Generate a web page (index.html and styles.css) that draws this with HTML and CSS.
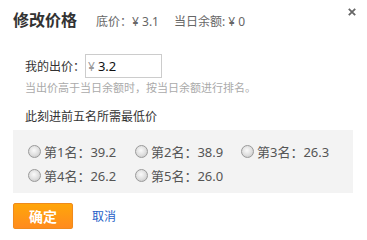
FILE: index.html
```html
<!DOCTYPE html>
<html lang="zh-CN">
<head>
<meta charset="utf-8">
<title>修改价格</title>
<link rel="stylesheet" href="styles.css">
</head>
<body>
<div class="dialog">
  <button class="close" aria-label="关闭">
    <svg width="8" height="8" viewBox="0 0 8 8"><path d="M0.8 0.8 L7.2 7.2 M7.2 0.8 L0.8 7.2" stroke="#666" stroke-width="1.8" fill="none"/></svg>
  </button>
  <div class="header">
    <h1 class="title">修改价格</h1>
    <span class="meta">底价：<span class="yen">¥</span> 3.1</span>
    <span class="meta">当日余额: <span class="yen">¥</span> 0</span>
  </div>
  <div class="bid-row">
    <label class="bid-label" for="bid">我的出价：</label>
    <div class="bid-input"><span class="cur">¥</span><input id="bid" value="3.2"></div>
  </div>
  <p class="hint">当出价高于当日余额时，按当日余额进行排名。</p>
  <p class="section">此刻进前五名所需最低价</p>
  <div class="ranks">
    <label class="rank"><input type="radio" name="r">第1名：39.2</label>
    <label class="rank"><input type="radio" name="r">第2名：38.9</label>
    <label class="rank"><input type="radio" name="r">第3名：26.3</label>
    <label class="rank"><input type="radio" name="r">第4名：26.2</label>
    <label class="rank"><input type="radio" name="r">第5名：26.0</label>
  </div>
  <div class="actions">
    <button class="ok">确定</button>
    <a class="cancel" href="#">取消</a>
  </div>
</div>
</body>
</html>
```
FILE: styles.css
```css
* { box-sizing: border-box; }
html, body { margin: 0; padding: 0; background: #fff; }
body {
  font-family: "Noto Sans", "Noto Sans CJK SC", sans-serif;
  color: #333;
  font-size: 12px;
}
.dialog {
  position: relative;
  width: 367px;
  padding: 8px 14px 0 13px;
}
.close {
  position: absolute;
  top: 7px;
  right: 10px;
  width: 10px;
  height: 10px;
  padding: 1px;
  border: 0;
  background: none;
  display: flex;
}
.header {
  display: flex;
  align-items: baseline;
  height: 24px;
}
.title {
  margin: 0 19px 0 0;
  font-size: 16px;
  font-weight: bold;
  line-height: 24px;
  color: #333;
}
.meta {
  font-size: 12px;
  color: #666;
  margin-right: 15px;
}
.yen { color: #666; }
.bid-row {
  display: flex;
  align-items: center;
  margin-top: 22px;
  padding-left: 12px;
  height: 24px;
}
.bid-label {
  width: 60px;
  font-size: 12px;
  color: #333;
}
.bid-input {
  display: flex;
  align-items: center;
  width: 77px;
  height: 24px;
  border: 1px solid #ccc;
  padding-left: 2px;
  background: #fff;
}
.cur { color: #999; font-size: 12px; margin-right: 3px; }
.bid-input input {
  border: 0;
  outline: none;
  width: 50px;
  padding: 0;
  font: 13px "Noto Sans", "Noto Sans CJK SC", sans-serif;
  color: #111;
}
.hint {
  margin: 2px 0 0 12px;
  font-size: 11px;
  line-height: 16px;
  color: #aaa;
}
.section {
  margin: 12px 0 0 12px;
  font-size: 12px;
  line-height: 18px;
  color: #333;
}
.ranks {
  margin-top: 4px;
  width: 340px;
  background: #f3f3f3;
  padding: 9px 0 6px 15px;
  display: grid;
  grid-template-columns: 107px 106px 106px;
  grid-auto-rows: 24px;
}
.rank {
  display: flex;
  align-items: center;
  font-size: 13px;
  color: #555;
}
.rank input {
  appearance: none;
  -webkit-appearance: none;
  width: 13px;
  height: 13px;
  margin: 0 3px 0 0;
  border-radius: 50%;
  border: 1px solid #9a9a9a;
  background: radial-gradient(circle at 45% 40%, #fafafa 0%, #dedede 55%, #bdbdbd 100%);
}
.actions {
  display: flex;
  align-items: center;
  margin-top: 10px;
}
.ok {
  width: 60px;
  height: 26px;
  border: 1px solid #f08a1c;
  border-radius: 2px;
  background: linear-gradient(#ffa60a, #ff8b1e);
  color: #fff;
  font: bold 14px "Noto Sans CJK SC", sans-serif;
  padding: 0;
  box-shadow: 0 1px 1px rgba(0,0,0,0.1);
}
.cancel {
  margin-left: 19px;
  font-size: 12px;
  color: #1f5fc8;
  text-decoration: none;
}
```
